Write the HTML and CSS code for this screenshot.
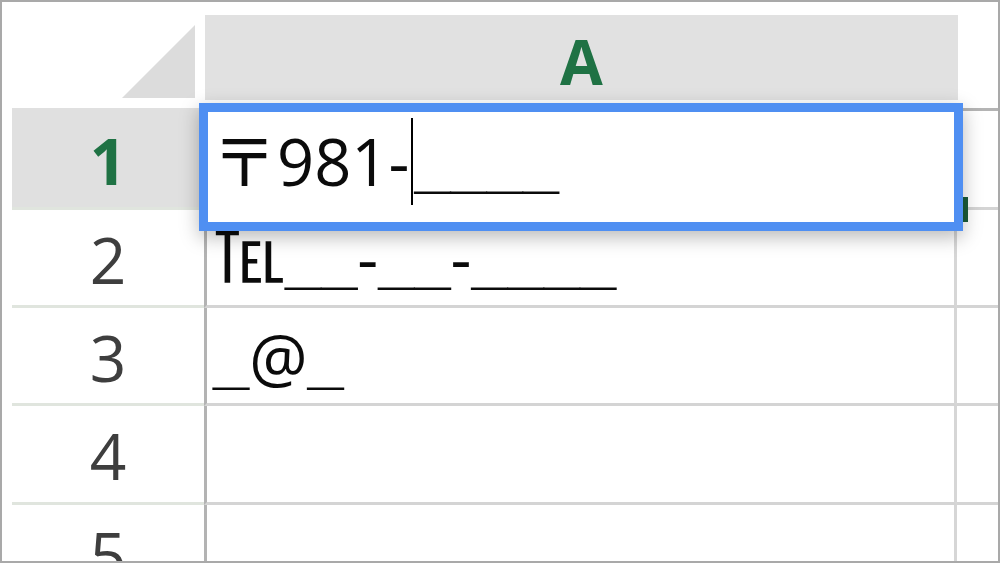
FILE: index.html
```html
<!DOCTYPE html>
<html lang="ja">
<head>
<meta charset="utf-8">
<title>Sheet</title>
<link rel="stylesheet" href="styles.css">
</head>
<body>
<div class="frame">
  <div class="sheet">
    <div class="corner"><div class="tri"></div></div>
    <div class="colhead"><span class="colname">A</span></div>
    <div class="cbh"></div>

    <div class="rh active">1</div>
    <div class="ca"></div>
    <div class="cb first"></div>

    <div class="rh">2</div>
    <div class="ca"><div class="val v2"><span class="tel">℡</span><span class="us">__</span>-<span class="us">__</span>-<span class="us">____</span></div></div>
    <div class="cb"></div>

    <div class="rh">3</div>
    <div class="ca"><div class="val v3"><span class="us">_</span>@<span class="us">_</span></div></div>
    <div class="cb"></div>

    <div class="rh">4</div>
    <div class="ca"></div>
    <div class="cb"></div>

    <div class="rh last">5</div>
    <div class="ca last"></div>
    <div class="cb last"></div>
  </div>

  <div class="fill-handle"></div>
  <div class="editor">
    <div class="edit-text">〒981-<span class="caret"></span><span class="us">____</span></div>
  </div>
</div>
</body>
</html>
```

FILE: styles.css
```css
html, body {
  margin: 0;
  padding: 0;
  background: #ffffff;
}

.frame {
  position: relative;
  width: 1000px;
  height: 563px;
  box-sizing: border-box;
  border: 2px solid #a9a9a9;
  background: #ffffff;
  overflow: hidden;
  font-family: "Open Sans", "Noto Sans CJK JP", sans-serif;
}

.sheet {
  display: grid;
  grid-template-columns: 202px 753px 1fr;
  grid-template-rows: 106px 102px 98px 98px 99px 1fr;
  height: 100%;
}

/* header row */
.corner {
  display: flex;
  justify-content: flex-end;
  align-items: flex-end;
  padding: 0 9px 10px 0;
}

.tri {
  width: 73px;
  height: 73px;
  background: #dcdcdc;
  clip-path: polygon(100% 0, 100% 100%, 0 100%);
}

.colhead {
  margin: 13px -1px 8px 1px;
  background: #e1e1e1;
  display: flex;
  align-items: center;
  justify-content: center;
  padding-top: 6px;
}

.colname {
  font-size: 62px;
  line-height: 62px;
  font-weight: 700;
  color: #1f7244;
}

/* row headers */
.rh {
  margin-left: 10px;
  border-bottom: 3px solid #e0e5de;
  display: flex;
  justify-content: center;
  align-items: center;
  padding-top: 4px;
  font-size: 64px;
  line-height: 64px;
  color: #3e3e3e;
}

.rh.active {
  background: #e0e0e0;
  color: #1f7244;
  font-weight: 700;
  padding-top: 6px;
}

.rh.last, .ca.last, .cb.last {
  border-bottom: none;
  align-items: flex-start;
  padding-top: 18px;
}

/* column A cells */
.ca {
  border-left: 3px solid #b3b3b3;
  border-right: 3px solid #d6d6d6;
  border-bottom: 3px solid #d4d4d4;
}

.cb {
  border-bottom: 3px solid #d4d4d4;
}

.cb.first {
  border-top: 3px solid #b4b4b4;
}

.val {
  font-size: 65px;
  line-height: 65px;
  color: #0b0b0b;
  padding-left: 6px;
  white-space: nowrap;
}

.v2 { padding-top: 15px; }
.v3 { padding-top: 17px; }

.tel {
  font-size: 71px;
  line-height: 0;
  font-weight: 400;
  font-family: "Noto Sans CJK JP", sans-serif;
  margin-left: 1px;
}

.us {
  font-family: "Liberation Sans", sans-serif;
  font-weight: 700;
}

/* active cell editor */
.editor {
  position: absolute;
  left: 197px;
  top: 101px;
  width: 764px;
  height: 128px;
  box-sizing: border-box;
  border: 9px solid #4f8ff2;
  background: #ffffff;
  box-shadow: 0 6px 18px rgba(0, 0, 0, 0.28);
}

.edit-text {
  font-size: 65px;
  line-height: 65px;
  color: #0b0b0b;
  padding: 17px 0 0 4px;
  white-space: nowrap;
}

.caret {
  display: inline-block;
  width: 2px;
  height: 87px;
  margin-top: -40px;
  margin-left: 2px;
  margin-right: 1px;
  background: #000000;
  vertical-align: -19px;
}

.fill-handle {
  position: absolute;
  left: 961px;
  top: 195px;
  width: 5px;
  height: 25px;
  background: #1b5d3a;
}
```
